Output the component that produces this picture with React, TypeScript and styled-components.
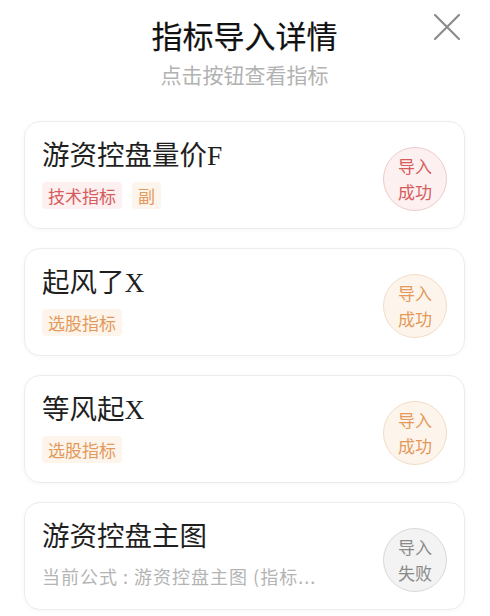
import React from "react";
import { styled, createGlobalStyle } from "styled-components";

const GlobalStyle = createGlobalStyle`
    html, body {
        margin: 0;
        padding: 0;
        background: #ffffff;
    }
    body {
        font-family: "Noto Sans CJK SC", "Noto Sans", sans-serif;
    }
`;

type Tone = "red" | "orange" | "gray";

const tones: Record<Tone, { bg: string; border: string; text: string }> = {
    red: { bg: "#fdf0f1", border: "#efcaca", text: "#d65c5c" },
    orange: { bg: "#fdf5ec", border: "#f2dcc4", text: "#e4995a" },
    gray: { bg: "#f3f3f3", border: "#d8d8d8", text: "#8a8a8a" },
};

const Page = styled.div`
    width: 490px;
    height: 616px;
    overflow: hidden;
    box-sizing: border-box;
    padding: 14px 25px 0 24px;
    display: flex;
    flex-direction: column;
    position: relative;
`;

const Header = styled.div`
    display: flex;
    flex-direction: column;
    align-items: center;
    margin-bottom: 33px;
`;

const Title = styled.div`
    font-size: 31px;
    line-height: 42px;
    font-weight: 400;
    -webkit-text-stroke: 0.2px #111111;
    color: #111111;
`;

const SubTitle = styled.div`
    font-size: 21px;
    line-height: 28px;
    color: #b2b2b2;
    margin-top: 4px;
`;

const CloseButton = styled.div`
    position: absolute;
    top: 12px;
    right: 28px;
    width: 30px;
    height: 30px;
    cursor: pointer;
`;

const List = styled.div`
    display: flex;
    flex-direction: column;
    gap: 19px;
`;

const Card = styled.div`
    height: 108px;
    box-sizing: border-box;
    border: 1px solid #ececec;
    border-radius: 16px;
    box-shadow: 0 1px 4px rgba(0, 0, 0, 0.04);
    padding: 17px 17px 0 17px;
    display: flex;
    align-items: center;
`;

const Info = styled.div`
    flex: 1;
    min-width: 0;
    align-self: flex-start;
    display: flex;
    flex-direction: column;
    gap: 9px;
`;

const Name = styled.div`
    font-family: "Liberation Serif", "Noto Sans CJK SC", serif;
    font-size: 27.5px;
    line-height: 34px;
    color: #1f1f1f;
`;

const Tags = styled.div`
    display: flex;
    gap: 10px;
`;

const Tag = styled.span<{ $tone: Tone }>`
    height: 27px;
    padding: 0 6px;
    display: inline-flex;
    align-items: center;
    border-radius: 4px;
    font-size: 17px;
    background: ${(p) => tones[p.$tone].bg};
    color: ${(p) => tones[p.$tone].text};
`;

const Formula = styled.div`
    font-size: 18px;
    line-height: 27px;
    letter-spacing: 1px;
    color: #b4b4b4;
    white-space: nowrap;
    overflow: hidden;
    text-overflow: ellipsis;
    margin-right: 20px;
`;

const Stamp = styled.div<{ $tone: Tone }>`
    width: 62px;
    height: 62px;
    flex-shrink: 0;
    margin-top: -10px;
    border-radius: 50%;
    border: 1px solid ${(p) => tones[p.$tone].border};
    background: ${(p) => tones[p.$tone].bg};
    color: ${(p) => tones[p.$tone].text};
    display: flex;
    flex-direction: column;
    align-items: center;
    justify-content: center;
    font-size: 17px;
    line-height: 26px;
`;

interface Item {
    name: string;
    tags?: { label: string; tone: Tone }[];
    formula?: string;
    ok: boolean;
    tone: Tone;
}

const items: Item[] = [
    {
        name: "游资控盘量价F",
        tags: [
            { label: "技术指标", tone: "red" },
            { label: "副", tone: "orange" },
        ],
        ok: true,
        tone: "red",
    },
    { name: "起风了X", tags: [{ label: "选股指标", tone: "orange" }], ok: true, tone: "orange" },
    { name: "等风起X", tags: [{ label: "选股指标", tone: "orange" }], ok: true, tone: "orange" },
    { name: "游资控盘主图", formula: "当前公式 : 游资控盘主图 (指标...", ok: false, tone: "gray" },
];

const CloseIcon = () => (
    <svg width="30" height="30" viewBox="0 0 30 30">
        <path d="M3 3 L27 27 M27 3 L3 27" stroke="#8c8c8c" strokeWidth="2.2" strokeLinecap="round" />
    </svg>
);

const App: React.FC = () => {
    return (
        <>
            <GlobalStyle />
            <Page>
                <CloseButton>
                    <CloseIcon />
                </CloseButton>
                <Header>
                    <Title>指标导入详情</Title>
                    <SubTitle>点击按钮查看指标</SubTitle>
                </Header>
                <List>
                    {items.map((item) => (
                        <Card key={item.name}>
                            <Info>
                                <Name>{item.name}</Name>
                                {item.tags && (
                                    <Tags>
                                        {item.tags.map((t) => (
                                            <Tag key={t.label} $tone={t.tone}>
                                                {t.label}
                                            </Tag>
                                        ))}
                                    </Tags>
                                )}
                                {item.formula && <Formula>{item.formula}</Formula>}
                            </Info>
                            <Stamp $tone={item.tone}>
                                <span>导入</span>
                                <span>{item.ok ? "成功" : "失败"}</span>
                            </Stamp>
                        </Card>
                    ))}
                </List>
            </Page>
        </>
    );
};

export default App;
